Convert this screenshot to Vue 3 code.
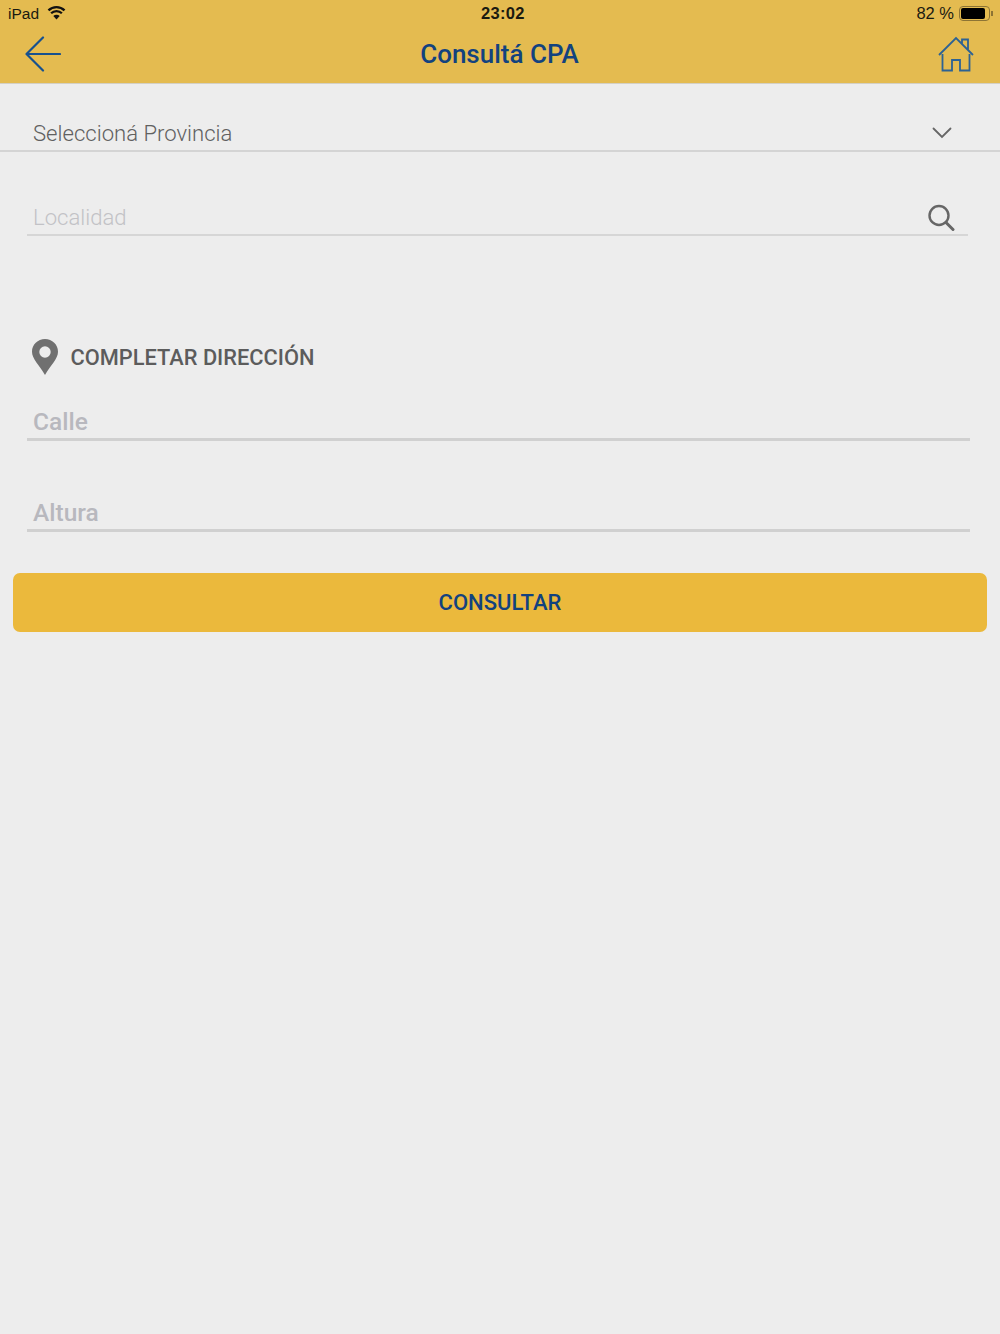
<template>
  <div class="page">
    <header class="top">
      <div class="status">
        <div class="st-left">
          <span>iPad</span>
          <svg class="wifi" width="19" height="15" viewBox="0 0 18 14">
            <path d="M9 13.6 6 10.300a4.200 4.200 0 0 1 6 0Z" fill="#111" />
            <path d="M1.400 5a10.800 10.800 0 0 1 15.200 0M3.900 7.700a7.300 7.300 0 0 1 10.200 0" fill="none" stroke="#111" stroke-width="2.200" />
          </svg>
        </div>
        <span class="st-time">23:02</span>
        <div class="st-right">
          <span>82 %</span>
          <div class="batt"><div class="batt-fill"></div></div>
          <div class="batt-tip"></div>
        </div>
      </div>
      <div class="nav">
        <svg class="back" width="36" height="36" viewBox="0 0 36 36">
          <path d="M18 1.500 1.500 18 18 34.500M1.500 18H35" fill="none" stroke="#16508f" stroke-width="2.200" stroke-linecap="round" stroke-linejoin="round" />
        </svg>
        <h1>Consultá CPA</h1>
        <svg class="home" width="36" height="36" viewBox="0 0 36 36">
          <path d="M1 19 18 2 35 19M4.500 18V34.500H14V24H22V34.500H31.500V18M24 8V3.500H30V14" fill="none" stroke="#2c6294" stroke-width="1.800" stroke-linejoin="miter" />
        </svg>
      </div>
    </header>

    <main class="body">
      <div class="select-row">
        <span>Seleccioná Provincia</span>
        <svg width="20" height="12" viewBox="0 0 20 12">
          <path d="M1.500 1.500 10 10 18.500 1.500" fill="none" stroke="#666" stroke-width="1.800" stroke-linecap="round" />
        </svg>
      </div>

      <div class="loc-row">
        <span>Localidad</span>
        <svg width="28" height="28" viewBox="0 0 28 28">
          <circle cx="12" cy="11.500" r="9.500" fill="none" stroke="#666" stroke-width="2.400" />
          <path d="M19 18.500 26 25.500" stroke="#666" stroke-width="3" stroke-linecap="round" />
        </svg>
      </div>

      <div class="section-title">
        <svg width="26" height="36" viewBox="0 0 26 36">
          <path fill-rule="evenodd" d="M13 0C5.800 0 0 5.600 0 12.700 0 20 7.500 26 13 36c5.500-10 13-16 13-23.300C26 5.600 20.200 0 13 0Zm0 7.300a5.700 5.700 0 1 1 0 11.400 5.700 5.700 0 0 1 0-11.400Z" fill="#707070" />
        </svg>
        <span>COMPLETAR DIRECCIÓN</span>
      </div>

      <div class="field first">Calle</div>
      <div class="field second">Altura</div>

      <div class="btn-wrap">
        <button class="btn">CONSULTAR</button>
      </div>
    </main>
  </div>
</template>

<script setup>
</script>

<style>
html, body { margin: 0; background: #ededed; }
</style>

<style scoped>
.page { width: 1000px; height: 1334px; background: #ededed; font-family: Roboto, sans-serif; overflow: hidden; }
.top { height: 83px; background: #e4bb50; border-bottom: 1px solid #d4d0c4; }
.status { height: 27px; padding: 0 8px; display: flex; justify-content: space-between; align-items: center; position: relative; font-family: "Liberation Sans", sans-serif; font-size: 15.500px; color: #1a1a10; }
.st-left { display: flex; align-items: center; gap: 8px; }
.wifi { margin-bottom: 2px; }
.st-time { position: absolute; left: 481px; font-weight: 700; font-size: 16.500px; letter-spacing: 0.300px; }
.st-right { display: flex; align-items: center; margin-right: -1px; }
.st-right span { margin-right: 5px; font-size: 16.500px; }
.batt { width: 31px; height: 15px; border: 1px solid #8d7434; border-radius: 4px; padding: 1px; box-sizing: border-box; }
.batt-fill { width: 24px; height: 11px; background: #000; border-radius: 2px; }
.batt-tip { width: 2px; height: 5px; background: #8d7434; margin-left: 1px; }
.nav { height: 56px; display: flex; align-items: center; justify-content: space-between; padding: 0 26px 2px 25px; box-sizing: border-box; }
.nav h1 { margin: 0; font-size: 26px; font-weight: 500; color: #12427f; }
.home { margin-bottom: 1px; }
.body { display: flex; flex-direction: column; }
.select-row { height: 68px; box-sizing: border-box; padding: 0 48px 0 33px; border-bottom: 2px solid #d4d4d4; display: flex; justify-content: space-between; align-items: flex-end; font-size: 22.100px; color: #606060; font-weight: 300; }
.select-row span { padding-bottom: 4px; }
.select-row svg { margin-bottom: 11px; }
.loc-row { height: 67px; margin: 17px 32px 0 27px; padding: 0 13px 0 6px; box-sizing: border-box; border-bottom: 2px solid #d6d6d6; display: flex; justify-content: space-between; align-items: flex-end; font-size: 22.100px; color: #c2c2c6; font-weight: 300; }
.loc-row span { padding-bottom: 4px; }
.loc-row svg { margin-bottom: 2px; }
.section-title { display: flex; align-items: center; gap: 12.500px; margin: 103px 0 0 32px; height: 36px; font-size: 21.800px; font-weight: 500; color: #5c5c5c; }
.field { margin: 0 30px 0 27px; padding: 1px 0 1px 6px; border-bottom: 3px solid #d0d0d0; font-size: 24.500px; font-weight: 500; color: #b8b8be; line-height: 30px; }
.first { margin-top: 31px; }
.second { margin-top: 56px; }
.btn-wrap { padding: 41px 13px 0; }
.btn { display: block; width: 100%; height: 59px; padding: 0; border: 0; border-radius: 7px; background: #ebb93c; color: #12427f; font-family: Roboto, sans-serif; font-size: 22px; font-weight: 500; }
</style>
